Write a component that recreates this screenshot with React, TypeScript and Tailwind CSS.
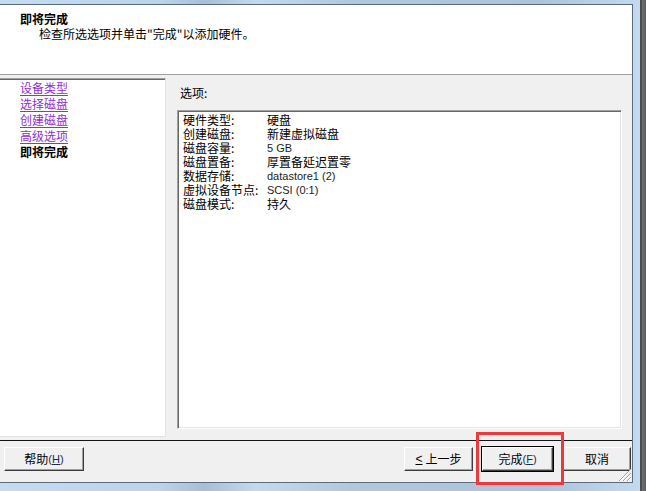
import React from "react";

const CJK = "font-['Noto_Sans_CJK_SC',sans-serif]";
const MIX = "font-['Liberation_Sans','Noto_Sans_CJK_SC',sans-serif]";

function Btn({
  children,
  className = "",
  isDefault = false,
}: {
  children: React.ReactNode;
  className?: string;
  isDefault?: boolean;
}) {
  const inner = (
    <div className="flex-1 h-full flex items-center justify-center bg-[#f0f0f0] border border-t-white border-l-white border-r-[#3c3c3c] border-b-[#3c3c3c] shadow-[inset_-1px_-1px_0_#a0a0a0] text-[12px] leading-none text-black">
      {children}
    </div>
  );
  if (isDefault) {
    return (
      <div className={`h-[26px] flex border border-black ${className}`}>{inner}</div>
    );
  }
  return <div className={`h-[24px] flex ${className}`}>{inner}</div>;
}

function Key({ k }: { k: string }) {
  return (
    <span className="font-['Liberation_Sans',sans-serif] text-[11px] text-[#1a2a50]">
      (<span className="underline underline-offset-1">{k}</span>)
    </span>
  );
}

const rows: [string, string, boolean][] = [
  ["硬件类型:", "硬盘", false],
  ["创建磁盘:", "新建虚拟磁盘", false],
  ["磁盘容量:", "5 GB", true],
  ["磁盘置备:", "厚置备延迟置零", false],
  ["数据存储:", "datastore1 (2)", true],
  ["虚拟设备节点:", "SCSI (0:1)", true],
  ["磁盘模式:", "持久", false],
];

const links = ["设备类型", "选择磁盘", "创建磁盘", "高级选项"];

export default function App() {
  return (
    <div className={`relative w-[646px] h-[491px] overflow-hidden flex ${CJK}`}>
      <div className="w-[640px] h-full flex flex-col pt-[4px] pb-[8px] pr-[7px] bg-[linear-gradient(90deg,#c6dbf0_0%,#bcd3ea_25%,#a9bed6_32%,#c4d9ee_40%,#b2c6dc_55%,#aec3da_85%,#c4daf0_100%)]">
        <div className="relative flex-1 flex flex-col border-t border-r border-b border-[#5c6c80] bg-[#f0f0f0]">
          {/* header */}
          <div className="h-[70px] bg-white border-b border-[#a0a0a0] pt-[6px]">
            <div className="pl-[20px] text-[12px] leading-[15px] font-bold text-black">即将完成</div>
            <div className="pl-[39px] text-[12px] leading-[16px] text-black">
              检查所选选项并单击"完成"以添加硬件。
            </div>
          </div>
          {/* body */}
          <div className="flex-1 flex flex-col">
            <div className="mt-[3px] h-[359px] flex">
              <div className="w-[166px] h-full bg-white border-t border-t-[#a0a0a0] border-r border-r-[#e3e3e3] border-b border-b-[#e3e3e3] shadow-[inset_0_1px_0_#696969] pt-[1px] pl-[20px]">
                {links.map((l) => (
                  <div key={l} className="text-[12px] leading-[16px] text-[#9030d0] underline underline-offset-2">
                    {l}
                  </div>
                ))}
                <div className="text-[12px] leading-[16px] font-bold text-black">即将完成</div>
              </div>
              <div className="flex-1 flex flex-col pl-[11px] pr-[10px]">
                <div className="pt-[7px] pl-[3px] text-[12px] leading-[16px] text-black">选项:</div>
                <div className="mt-[9px] h-[319px] bg-white border border-t-[#a0a0a0] border-l-[#a0a0a0] border-r-white border-b-white shadow-[inset_1px_1px_0_#696969,inset_-1px_-1px_0_#e3e3e3] pl-[5px] pt-[2px]">
                  {rows.map(([a, b, latin]) => (
                    <div key={a} className="grid grid-cols-[84px_1fr] text-[12px] leading-[14px] text-black">
                      <span>{a}</span>
                      <span className={latin ? `${MIX} text-[11px] text-[#1c1c1c]` : ""}>{b}</span>
                    </div>
                  ))}
                </div>
              </div>
            </div>
            <div className="mt-[3px] h-px bg-[#141414]" />
            <div className="mt-[5px] flex items-start pl-[4px] pr-[1px]">
              <Btn className="w-[80px] mt-[1px]">
                帮助<Key k="H" />
              </Btn>
              <Btn className="w-[69px] ml-auto mt-[1px]">
                <span className="font-['Liberation_Sans',sans-serif] underline underline-offset-1 mr-[3px]">&lt;</span>
                上一步
              </Btn>
              <Btn isDefault className="w-[73px] ml-[8px]">
                完成<Key k="F" />
              </Btn>
              <Btn className="w-[68px] ml-[9px] mt-[1px]">取消</Btn>
            </div>
          </div>
          {/* resize grip */}
          <svg className="absolute right-[1px] bottom-[1px]" width="13" height="13" viewBox="0 0 13 13">
            {[0, 4, 8].map((o) => (
              <g key={o}>
                <line x1={13 - (12 - o)} y1={13} x2={13} y2={13 - (12 - o)} stroke="#a0a0a0" strokeWidth="1" />
                <line x1={13 - (12 - o) + 1} y1={13} x2={13} y2={13 - (12 - o) + 1} stroke="#ffffff" strokeWidth="1" />
              </g>
            ))}
          </svg>
        </div>
      </div>
      <div className="w-[6px] h-full bg-[linear-gradient(90deg,#4e4e4e_0%,#4e4e4e_30%,#6e6e6e_40%,#5e5e5e_100%)]" />
      {/* red annotation box */}
      <div className="absolute left-[476px] top-[432px] w-[88px] h-[53px] border-[3px] border-[#ec3a3c]" />
    </div>
  );
}
